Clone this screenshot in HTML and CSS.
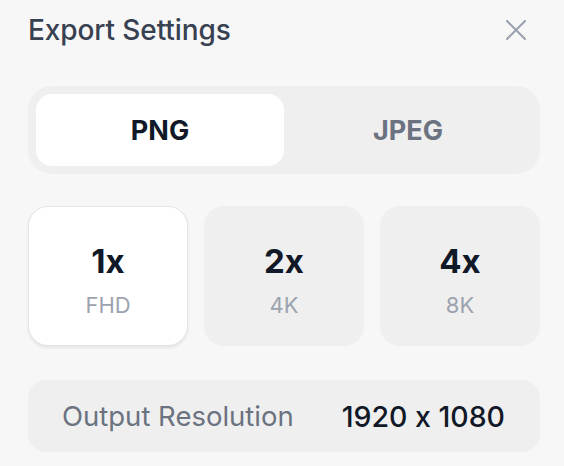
FILE: index.html
```html
<!DOCTYPE html>
<html lang="en">
<head>
<meta charset="utf-8">
<title>Export Settings</title>
<link rel="stylesheet" href="styles.css">
</head>
<body>
<div class="panel">
  <header class="header">
    <h1 class="title">Export Settings</h1>
    <button class="close" aria-label="Close">
      <svg width="20" height="20" viewBox="0 0 20 20" fill="none" stroke="currentColor" stroke-width="2.2" stroke-linecap="round">
        <path d="M1 1 L19 19 M19 1 L1 19"/>
      </svg>
    </button>
  </header>

  <div class="segmented">
    <button class="seg seg-active">PNG</button>
    <button class="seg">JPEG</button>
  </div>

  <div class="scales">
    <div class="scale scale-active">
      <span class="scale-num">1x</span>
      <span class="scale-sub">FHD</span>
    </div>
    <div class="scale">
      <span class="scale-num">2x</span>
      <span class="scale-sub">4K</span>
    </div>
    <div class="scale">
      <span class="scale-num">4x</span>
      <span class="scale-sub">8K</span>
    </div>
  </div>

  <div class="info">
    <span class="info-label">Output Resolution</span>
    <span class="info-value">1920 x 1080</span>
  </div>
</div>
</body>
</html>
```

FILE: styles.css
```css
* { box-sizing: border-box; }

html, body {
  margin: 0;
  padding: 0;
  background: #f7f7f7;
}

body {
  font-family: Inter, "Noto Sans", "Liberation Sans", sans-serif;
  font-feature-settings: "calt" 0;
  -webkit-font-smoothing: antialiased;
}

.panel {
  width: 564px;
  height: 466px;
  padding: 0 24px 0 28px;
  display: flex;
  flex-direction: column;
}

.header {
  height: 60px;
  display: flex;
  align-items: center;
  justify-content: space-between;
}

.title {
  margin: 0;
  font-size: 28px;
  font-weight: 500;
  color: #374151;
  letter-spacing: -0.1px;
}

.close {
  border: 0;
  background: none;
  padding: 0;
  width: 20px;
  height: 20px;
  margin-right: 14px;
  color: #9ca3af;
  display: flex;
}

.segmented {
  margin-top: 26px;
  height: 88px;
  padding: 8px;
  border-radius: 24px;
  background: #efefef;
  display: grid;
  grid-template-columns: 1fr 1fr;
}

.seg {
  border: 0;
  background: transparent;
  border-radius: 16px;
  font-family: inherit;
  font-feature-settings: "calt" 0;
  font-size: 27px;
  font-weight: 700;
  color: #6b7280;
  padding: 0;
}

.seg-active {
  background: #ffffff;
  color: #111827;
}

.scales {
  margin-top: 32px;
  display: grid;
  grid-template-columns: repeat(3, 1fr);
  gap: 16px;
}

.scale {
  height: 140px;
  border-radius: 20px;
  background: #efefef;
  display: flex;
  flex-direction: column;
  align-items: center;
  padding-top: 37px;
  gap: 12px;
}

.scale-active {
  background: #ffffff;
  border: 1px solid #e3e4e7;
  padding-top: 36px;
  box-shadow: 0 2px 3px rgba(0, 0, 0, 0.07);
}

.scale-num {
  font-size: 33px;
  line-height: 36px;
  font-weight: 700;
  color: #111827;
}

.scale-sub {
  font-size: 22px;
  line-height: 28px;
  font-weight: 400;
  color: #9ca3af;
}

.info {
  margin-top: 34px;
  height: 72px;
  border-radius: 18px;
  background: #efefef;
  display: flex;
  align-items: center;
  justify-content: space-between;
  padding: 0 35px 0 34px;
}

.info-label {
  font-size: 27.5px;
  color: #6b7280;
}

.info-value {
  font-size: 28.5px;
  font-weight: 500;
  color: #111827;
}
```
